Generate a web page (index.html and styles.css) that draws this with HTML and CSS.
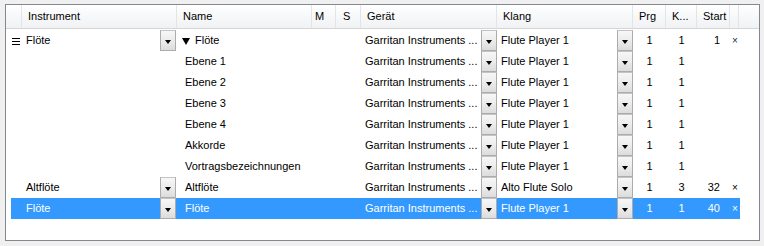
FILE: index.html
```html
<!DOCTYPE html>
<html lang="de">
<head>
  <meta charset="UTF-8">
  <title>Instrumente</title>
  <link rel="stylesheet" href="styles.css">
</head>
<body>
<div class="frame">
  <!-- Column headers -->
  <div class="head">
    <div class="hc"></div>
    <div class="hc">Instrument</div>
    <div class="hc">Name</div>
    <div class="hc hc-m">M</div>
    <div class="hc hc-s">S</div>
    <div class="hc">Gerät</div>
    <div class="hc">Klang</div>
    <div class="hc">Prg</div>
    <div class="hc">K...</div>
    <div class="hc">Start</div>
    <div class="hc"></div>
    <div class="hc hc-fill"></div>
  </div>

  <div class="rows">
    <div class="row">
      <div class="cell handle"><span class="grip"></span></div>
      <div class="cell combo"><span class="val">Flöte</span><span class="drop"></span></div>
      <div class="cell name"><span class="tri"></span>Flöte</div>
      <div class="cell"></div>
      <div class="cell"></div>
      <div class="cell combo"><span class="val">Garritan Instruments ...</span><span class="drop"></span></div>
      <div class="cell combo"><span class="val">Flute Player 1</span><span class="drop"></span></div>
      <div class="cell num">1</div>
      <div class="cell num">1</div>
      <div class="cell start">1</div>
      <div class="cell del">×</div>
    </div>

    <div class="row">
      <div class="cell"></div>
      <div class="cell"></div>
      <div class="cell name sub">Ebene 1</div>
      <div class="cell"></div>
      <div class="cell"></div>
      <div class="cell combo"><span class="val">Garritan Instruments ...</span><span class="drop"></span></div>
      <div class="cell combo"><span class="val">Flute Player 1</span><span class="drop"></span></div>
      <div class="cell num">1</div>
      <div class="cell num">1</div>
      <div class="cell start"></div>
      <div class="cell"></div>
    </div>

    <div class="row">
      <div class="cell"></div>
      <div class="cell"></div>
      <div class="cell name sub">Ebene 2</div>
      <div class="cell"></div>
      <div class="cell"></div>
      <div class="cell combo"><span class="val">Garritan Instruments ...</span><span class="drop"></span></div>
      <div class="cell combo"><span class="val">Flute Player 1</span><span class="drop"></span></div>
      <div class="cell num">1</div>
      <div class="cell num">1</div>
      <div class="cell start"></div>
      <div class="cell"></div>
    </div>

    <div class="row">
      <div class="cell"></div>
      <div class="cell"></div>
      <div class="cell name sub">Ebene 3</div>
      <div class="cell"></div>
      <div class="cell"></div>
      <div class="cell combo"><span class="val">Garritan Instruments ...</span><span class="drop"></span></div>
      <div class="cell combo"><span class="val">Flute Player 1</span><span class="drop"></span></div>
      <div class="cell num">1</div>
      <div class="cell num">1</div>
      <div class="cell start"></div>
      <div class="cell"></div>
    </div>

    <div class="row">
      <div class="cell"></div>
      <div class="cell"></div>
      <div class="cell name sub">Ebene 4</div>
      <div class="cell"></div>
      <div class="cell"></div>
      <div class="cell combo"><span class="val">Garritan Instruments ...</span><span class="drop"></span></div>
      <div class="cell combo"><span class="val">Flute Player 1</span><span class="drop"></span></div>
      <div class="cell num">1</div>
      <div class="cell num">1</div>
      <div class="cell start"></div>
      <div class="cell"></div>
    </div>

    <div class="row">
      <div class="cell"></div>
      <div class="cell"></div>
      <div class="cell name sub">Akkorde</div>
      <div class="cell"></div>
      <div class="cell"></div>
      <div class="cell combo"><span class="val">Garritan Instruments ...</span><span class="drop"></span></div>
      <div class="cell combo"><span class="val">Flute Player 1</span><span class="drop"></span></div>
      <div class="cell num">1</div>
      <div class="cell num">1</div>
      <div class="cell start"></div>
      <div class="cell"></div>
    </div>

    <div class="row">
      <div class="cell"></div>
      <div class="cell"></div>
      <div class="cell name sub">Vortragsbezeichnungen</div>
      <div class="cell"></div>
      <div class="cell"></div>
      <div class="cell combo"><span class="val">Garritan Instruments ...</span><span class="drop"></span></div>
      <div class="cell combo"><span class="val">Flute Player 1</span><span class="drop"></span></div>
      <div class="cell num">1</div>
      <div class="cell num">1</div>
      <div class="cell start"></div>
      <div class="cell"></div>
    </div>

    <div class="row">
      <div class="cell"></div>
      <div class="cell combo"><span class="val">Altflöte</span><span class="drop"></span></div>
      <div class="cell name sub">Altflöte</div>
      <div class="cell"></div>
      <div class="cell"></div>
      <div class="cell combo"><span class="val">Garritan Instruments ...</span><span class="drop"></span></div>
      <div class="cell combo"><span class="val">Alto Flute Solo</span><span class="drop"></span></div>
      <div class="cell num">1</div>
      <div class="cell num">3</div>
      <div class="cell start">32</div>
      <div class="cell del">×</div>
    </div>

    <div class="row selected">
      <div class="cell"></div>
      <div class="cell combo"><span class="val">Flöte</span><span class="drop"></span></div>
      <div class="cell name sub">Flöte</div>
      <div class="cell"></div>
      <div class="cell"></div>
      <div class="cell combo"><span class="val">Garritan Instruments ...</span><span class="drop"></span></div>
      <div class="cell combo"><span class="val">Flute Player 1</span><span class="drop"></span></div>
      <div class="cell num">1</div>
      <div class="cell num">1</div>
      <div class="cell start">40</div>
      <div class="cell del">×</div>
    </div>
  </div>
</div>
</body>
</html>
```

FILE: styles.css
```css
body {
  margin: 0;
  background: #f0f0f0;
  font-family: "Liberation Sans", Arial, sans-serif;
  font-size: 11px;
  color: #000;
}
.frame {
  margin: 4px 0 0 5px;
  width: 753px;
  height: 235px;
  border: 1px solid #828790;
  background: #fff;
}

/* header */
.head {
  display: grid;
  grid-template-columns: 16px 155px 135px 24px 25px 136px 136px 33px 31px 33px 9px 1fr;
  height: 23px;
  border-bottom: 1px solid #d5d5d5;
  background: linear-gradient(#ffffff, #f7f8f9 50%, #f1f2f4);
}
.hc {
  box-sizing: border-box;
  border-right: 1px solid #e3e4e6;
  padding-left: 6px;
  line-height: 23px;
  white-space: nowrap;
  overflow: hidden;
}
.hc-m { padding-left: 3px; }
.hc-s { padding-left: 7px; }
.hc-fill { border-right: none; }

/* rows */
.rows {
  margin-top: 1px;
  margin-left: 5px;
  width: 729px;
}
.row {
  display: grid;
  grid-template-columns: 11px 155px 135px 24px 25px 136px 136px 33px 31px 33px 10px;
  height: 21px;
  line-height: 21px;
}
.row.selected {
  background: #3399ff;
  color: #fff;
}
.cell {
  white-space: nowrap;
  overflow: hidden;
}
.handle {
  display: flex;
  align-items: center;
}
.grip {
  width: 8px;
  height: 7px;
  margin-left: 1px;
  margin-top: 1px;
  background: linear-gradient(#000 0 1px, transparent 1px 3px, #000 3px 4px, transparent 4px 6px, #000 6px 7px);
}
.combo {
  display: flex;
}
.combo .val {
  flex: 1;
  padding-left: 4px;
  overflow: hidden;
}
.combo:nth-child(2) .val { padding-left: 4px; }
.combo:nth-child(2) .drop { margin-right: 1px; }
.drop {
  position: relative;
  box-sizing: border-box;
  width: 16px;
  height: 21px;
  border: 1px solid #acacac;
  border-top-color: #c4c4c4;
  background: linear-gradient(#f7f7f7, #ececec 50%, #dcdcdc);
}
.drop::after {
  content: "";
  position: absolute;
  left: 4px;
  top: 9px;
  border-top: 4px solid #000;
  border-left: 3.5px solid transparent;
  border-right: 3.5px solid transparent;
}
.name {
  padding-left: 5px;
  display: flex;
  align-items: center;
}
.name.sub { padding-left: 8px; }
.tri {
  width: 0;
  height: 0;
  margin-right: 5px;
  margin-top: 1px;
  border-top: 7px solid #000;
  border-left: 4px solid transparent;
  border-right: 4px solid transparent;
}
.num {
  text-align: center;
}
.start {
  text-align: right;
  padding-right: 10px;
}
.del {
  text-align: center;
  font-size: 10px;
  color: #1a2a55;
}
.selected .del { color: #fff; }
.row:nth-child(8) .del { color: #000; }
```
